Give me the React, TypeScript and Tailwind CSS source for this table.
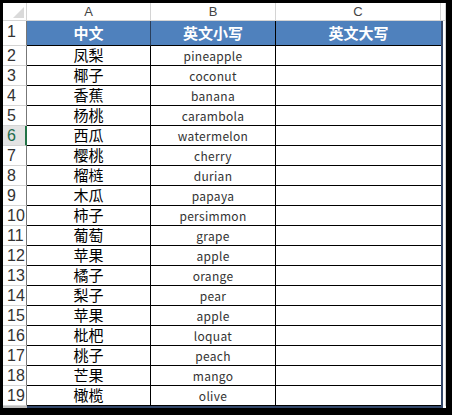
const rows: [string, string][] = [
  ["凤梨", "pineapple"],
  ["椰子", "coconut"],
  ["香蕉", "banana"],
  ["杨桃", "carambola"],
  ["西瓜", "watermelon"],
  ["樱桃", "cherry"],
  ["榴梿", "durian"],
  ["木瓜", "papaya"],
  ["柿子", "persimmon"],
  ["葡萄", "grape"],
  ["苹果", "apple"],
  ["橘子", "orange"],
  ["梨子", "pear"],
  ["苹果", "apple"],
  ["枇杷", "loquat"],
  ["桃子", "peach"],
  ["芒果", "mango"],
  ["橄榄", "olive"],
];

const cjk = "font-['Noto_Sans_CJK_SC','Noto_Sans',sans-serif]";
const num = "font-['Liberation_Sans',Arial,sans-serif]";

export default function App() {
  return (
    <div className="w-[452px] h-[415px] bg-black pt-[3px] pl-[3px] pr-[6px] pb-[7px]">
      <div className="w-full h-full bg-white flex flex-col">
        {/* column letters */}
        <div className={`flex h-[18px] shrink-0 ${num} text-[13px] text-[#444]`}>
          <div className="w-[24px] border-r border-b border-[#d4d4d4] relative">
            <svg className="absolute right-[2px] bottom-[2px]" width="11" height="11" viewBox="0 0 11 11">
              <polygon points="11,0 11,11 0,11" fill="#dadada" />
            </svg>
          </div>
          <div className="w-[124px] border-r border-b border-[#d4d4d4] flex items-center justify-center">A</div>
          <div className="w-[125px] border-r border-b border-[#d4d4d4] flex items-center justify-center">B</div>
          <div className="w-[165px] border-r border-b border-[#d4d4d4] flex items-center justify-center">C</div>
          <div className="w-[2px] border-b border-[#d4d4d4]" />
          <div className="w-[3px] border-b border-r border-[#d4d4d4]" />
        </div>

        {/* header row */}
        <div className="flex h-[25px] shrink-0">
          <div className={`w-[24px] border-r border-r-[#777] border-b border-b-[#d4d4d4] flex items-end pl-[4px] pb-[1px] ${num} text-[16px] text-[#333]`}>
            1
          </div>
          <div className={`w-[124px] bg-[#4f81bd] border-r border-[#2a3f5c] border-b border-b-black flex items-center justify-center text-white font-bold text-[15px] ${cjk}`}>
            中文
          </div>
          <div className={`w-[125px] bg-[#4f81bd] border-r border-black border-b flex items-center justify-center text-white font-bold text-[15px] ${cjk}`}>
            英文小写
          </div>
          <div className={`w-[165px] bg-[#4f81bd] border-b border-black flex items-center justify-center text-white font-bold text-[15px] ${cjk}`}>
            英文大写
          </div>
          <div className="w-[2px] bg-[#34486b]" />
          <div className="w-[3px] border-r border-[#d4d4d4]" />
        </div>

        {rows.map(([zh, en], i) => {
          const n = i + 2;
          const sel = n === 6;
          return (
            <div key={n} className="flex h-[20px] shrink-0">
              <div
                className={`w-[24px] border-b border-b-[#d4d4d4] flex items-end pl-[4px] ${num} text-[16px] leading-[19px] ${
                  sel ? "bg-[#e3e3e3] text-[#1f6b4d] border-r-2 border-r-[#217346]" : "text-[#333] border-r border-r-[#777]"
                }`}
              >
                {n}
              </div>
              <div className={`w-[124px] border-r border-b border-black flex items-center justify-center text-[15px] text-black ${cjk}`}>
                {zh}
              </div>
              <div className={`w-[125px] border-r border-b border-black flex items-center justify-center text-[12px] text-[#333] tracking-[0.3px] ${cjk}`}>
                {en}
              </div>
              <div className="w-[165px] border-b border-black" />
              <div className="w-[2px] bg-[#34486b]" />
              <div className="w-[3px] border-r border-[#d4d4d4]" />
            </div>
          );
        })}

        {/* bottom edge */}
        <div className="flex h-[2px] shrink-0">
          <div className="w-[24px] bg-[#bbb]" />
          <div className="w-[416px] bg-[#34486b]" />
          <div className="w-[3px]" />
        </div>
      </div>
    </div>
  );
}
